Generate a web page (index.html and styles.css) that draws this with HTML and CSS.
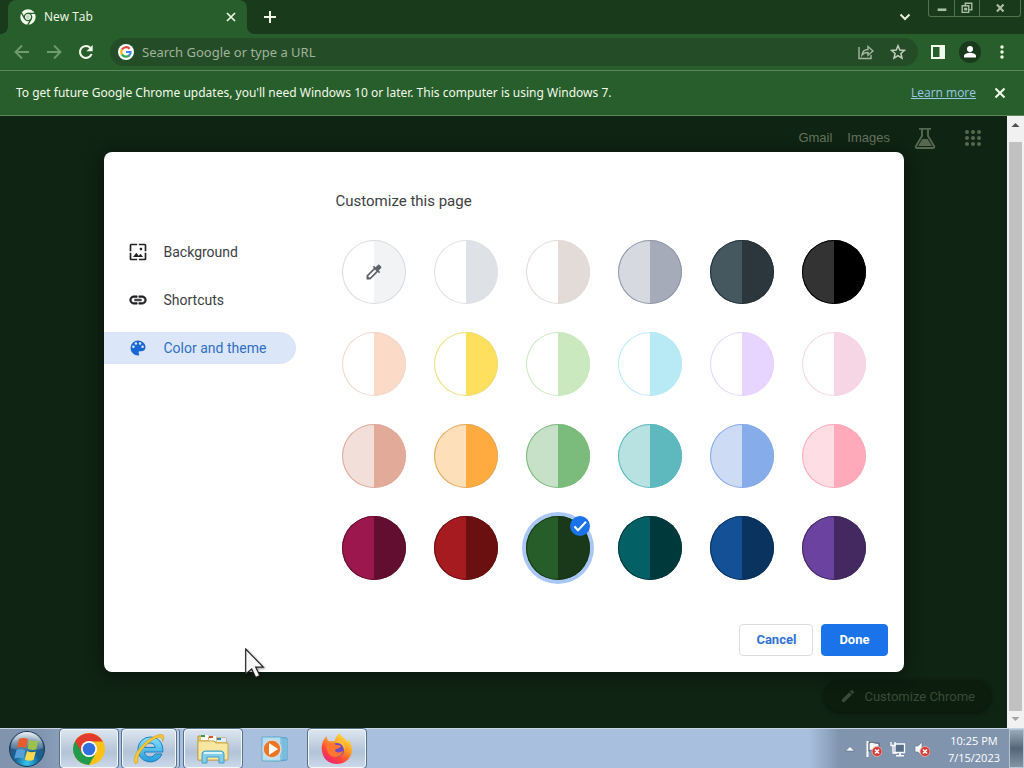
FILE: index.html
```html
<!DOCTYPE html>
<html lang="en">
<head>
<meta charset="utf-8">
<title>New Tab</title>
<link rel="stylesheet" href="styles.css">
</head>
<body>
<header class="browser">
  <div class="tab-strip">
    <div class="tab">
      <svg class="tab-icon" viewBox="0 0 24 24"><circle cx="12" cy="12" r="11.5" fill="#f1fbea"/><g fill="none" stroke="#285e2b" stroke-width="2"><circle cx="12" cy="12" r="5.5"/><path d="M12 6.5h11M7.2 14.7 2 5.5M16.8 14.7 11.500 24"/></g><circle cx="12" cy="12" r="3" fill="#c5d4c0"/></svg>
      <span class="tab-title">New Tab</span>
      <button class="icon-button tab-close" aria-label="Close tab"><svg viewBox="0 0 16 16"><path d="M4 4l8 8M12 4l-8 8" stroke="#eef8e6" stroke-width="1.700"/></svg></button>
    </div>
    <button class="icon-button new-tab" aria-label="New tab"><svg viewBox="0 0 16 16"><path d="M8 2v12M2 8h12" stroke="#eef8e6" stroke-width="2"/></svg></button>
    <button class="icon-button tab-search" aria-label="Search tabs"><svg viewBox="0 0 16 16"><path d="M3.500 5.500 8 10l4.500-4.500" fill="none" stroke="#e4f0dc" stroke-width="2"/></svg></button>
    <div class="window-controls">
      <button aria-label="Minimize"><svg viewBox="0 0 16 16"><path d="M3 8.500h10v3H3z" fill="#a8bfa4"/></svg></button>
      <button aria-label="Restore"><svg viewBox="0 0 16 16"><path d="M6 5V2.500h7.500V10H11M2.500 5.500h7.500V13H2.500zM5.500 8.500h2V10h-2z" fill="none" stroke="#a8bfa4" stroke-width="1.600"/></svg></button>
      <button class="window-close" aria-label="Close"><svg viewBox="0 0 16 16"><path d="m4.500 4 7.500 8M12 4l-7.500 8" stroke="#a8bfa4" stroke-width="2.400"/></svg></button>
    </div>
  </div>
  <div class="toolbar">
    <button class="icon-button" aria-label="Back"><svg viewBox="0 0 16 16"><path d="M15 8H2M8 1.500 1.500 8 8 14.500" fill="none" stroke="#729a70" stroke-width="1.800"/></svg></button>
    <button class="icon-button" aria-label="Forward"><svg viewBox="0 0 16 16"><path d="M1 8h13M8 1.500 14.500 8 8 14.500" fill="none" stroke="#729a70" stroke-width="1.800"/></svg></button>
    <button class="icon-button" aria-label="Reload"><svg viewBox="0 0 16 16"><path d="M13.600 10A6 6 0 1 1 12.500 4" fill="none" stroke="#f1fbea" stroke-width="2.100"/><path d="M14.700 1v6.300H8.400z" fill="#f1fbea"/></svg></button>
    <div class="omnibox">
      <span class="cell"><svg viewBox="0 0 16 16"><circle cx="8" cy="8" r="8" fill="#fff"/><g fill="none" stroke-width="2.200"><path d="M11.600 4.800A4.700 4.700 0 0 0 4 5.600" stroke="#e84436"/><path d="M4 5.500a4.800 4.800 0 0 0 0 5" stroke="#f9bb10"/><path d="M4 10.400a4.700 4.700 0 0 0 7.300 1" stroke="#34a853"/><path d="M11.100 11.600A4.500 4.500 0 0 0 12.600 8H8" stroke="#4285f4"/></g></svg></span>
      <input class="omnibox-input" type="text" aria-label="Address and search bar" placeholder="Search Google or type a URL">
      <button class="icon-button" aria-label="Share"><svg viewBox="0 0 16 16"><g fill="none" stroke="#a5b7a0" stroke-width="1.400"><path d="M1 3v11.500h12V11"/><path d="M4 11c.5-4 3-5.500 6-5.500V2.500L15 7l-5 4.300V8.500C7 8.500 5.500 9 4 11z"/></g></svg></button>
      <button class="icon-button" aria-label="Bookmark this tab"><svg viewBox="0 0 16 16"><path d="m8 1.700 1.800 4.300 4.700.4-3.600 3.100 1.100 4.600L8 11.600l-4 2.500 1.100-4.600L1.500 6.400 6.200 6z" fill="none" stroke="#c2cfbd" stroke-width="1.500"/></svg></button>
    </div>
    <button class="icon-button" aria-label="Side panel"><svg viewBox="0 0 16 16"><path d="M2 2h12v12H2z" fill="none" stroke="#f1fbea" stroke-width="2"/><path d="M9.500 2H14v12H9.500z" fill="#f1fbea"/></svg></button>
    <button class="icon-button profile" aria-label="Profile"><svg viewBox="0 0 22 22"><circle cx="11" cy="11" r="11" fill="#193a1b"/><circle cx="11" cy="8" r="3" fill="#fff"/><path d="M5 16.500v-1.700c0-2 4-3 6-3s6 1 6 3v1.700z" fill="#fff"/></svg></button>
    <button class="icon-button" aria-label="Menu"><svg viewBox="0 0 16 16"><g fill="#f1fbea"><circle cx="8" cy="3" r="1.700"/><circle cx="8" cy="8" r="1.700"/><circle cx="8" cy="13" r="1.700"/></g></svg></button>
  </div>
  <div class="infobar">
    <p class="infobar-text">To get future Google Chrome updates, you'll need Windows 10 or later. This computer is using Windows 7.</p>
    <a class="infobar-link" href="#">Learn more</a>
    <button class="icon-button infobar-close" aria-label="Dismiss"><svg viewBox="0 0 16 16"><path d="m3.500 3.500 9 9M12.500 3.500l-9 9" stroke="#f1fbea" stroke-width="2"/></svg></button>
  </div>
</header>

<main class="viewport">
  <div class="page">
    <nav class="page-nav">
      <a href="#">Gmail</a>
      <a href="#">Images</a>
      <button class="icon-button labs" aria-label="Search Labs"><svg viewBox="0 0 24 24"><path d="M6 2h12v1.700H6z" fill="#56684f"/><path d="M9 3v7L3 20c-.8 1.300 0 2 1 2h16c1 0 1.800-.7 1-2l-6-10V3" fill="none" stroke="#56684f" stroke-width="1.900"/><path d="M9.500 13h5l4.500 7H5z" fill="#56684f"/></svg></button>
      <button class="icon-button apps" aria-label="Google apps"><svg viewBox="0 0 24 24"><path d="M6 6h.01M12 6h.01M18 6h.01M6 12h.01M12 12h.01M18 12h.01M6 18h.01M12 18h.01M18 18h.01" stroke="#56684f" stroke-width="4" stroke-linecap="round"/></svg></button>
    </nav>
    <button class="customize"><svg viewBox="0 0 24 24"><path d="M3 17.250V21h3.750L17.810 9.940l-3.750-3.750zM20.710 7.040a1 1 0 0 0 0-1.410l-2.340-2.340a1 1 0 0 0-1.410 0l-1.830 1.830 3.750 3.750z" fill="#3a4b37"/></svg>Customize Chrome</button>

    <section class="dialog" role="dialog" aria-labelledby="dialog-title">
      <nav class="menu">
        <button class="menu-item"><svg viewBox="0 0 24 24"><path d="M4 4h7V2H4c-1.100 0-2 .9-2 2v7h2zm6 9-4 5h12l-3-4-2.030 2.710zm7-4.500c0-.83-.67-1.500-1.500-1.500S14 7.670 14 8.500s.67 1.500 1.500 1.500S17 9.330 17 8.500zM20 2h-7v2h7v7h2V4c0-1.100-.9-2-2-2zm0 18h-7v2h7c1.100 0 2-.9 2-2v-7h-2zM4 13H2v7c0 1.100.9 2 2 2h7v-2H4z" fill="#202124"/></svg>Background</button>
        <button class="menu-item"><svg viewBox="0 0 24 24"><path d="M3.900 12c0-1.710 1.390-3.100 3.100-3.100h4V7H7c-2.760 0-5 2.240-5 5s2.240 5 5 5h4v-1.900H7c-1.710 0-3.100-1.390-3.100-3.100zM8 13h8v-2H8zm9-6h-4v1.900h4c1.710 0 3.100 1.390 3.100 3.100s-1.390 3.100-3.100 3.100h-4V17h4c2.760 0 5-2.240 5-5s-2.240-5-5-5z" fill="#202124" stroke="#202124" stroke-width=".7"/></svg>Shortcuts</button>
        <button class="menu-item selected" aria-current="page"><svg viewBox="0 0 24 24"><path d="M12 3a9 9 0 0 0 0 18c.83 0 1.500-.67 1.500-1.500 0-.39-.15-.74-.39-1.010-.23-.26-.38-.61-.38-.99 0-.83.67-1.500 1.500-1.500H16c2.760 0 5-2.240 5-5 0-4.420-4.030-8-9-8zm-5.500 9c-.83 0-1.500-.67-1.500-1.500S5.670 9 6.500 9 8 9.670 8 10.500 7.330 12 6.500 12zm3-4C8.670 8 8 7.330 8 6.500S8.670 5 9.500 5s1.500.67 1.500 1.500S10.330 8 9.500 8zm5 0c-.83 0-1.500-.67-1.500-1.500S13.670 5 14.500 5s1.500.67 1.500 1.500S15.330 8 14.500 8zm3 4c-.83 0-1.500-.67-1.500-1.500S16.670 9 17.500 9s1.500.67 1.500 1.500-.67 1.500-1.500 1.500z" fill="#1967d2"/></svg>Color and theme</button>
      </nav>
      <div class="content">
        <h1 class="dialog-title" id="dialog-title">Customize this page</h1>
        <div class="swatches" role="radiogroup" aria-label="Color and theme">
          <label class="swatch"><input class="custom" type="radio" name="theme" aria-label="Custom color"><svg class="picker" viewBox="0 0 24 24"><path d="m20.710 5.630-2.340-2.340a1 1 0 0 0-1.410 0l-3.120 3.120-1.930-1.910-1.410 1.410 1.420 1.420L3 16.250V21h4.750l8.920-8.920 1.420 1.420 1.410-1.410-1.920-1.920 3.120-3.120c.4-.4.4-1.030.01-1.420zM6.920 19 5 17.080l8.060-8.060 1.920 1.920z" fill="#5f6368"/></svg></label>
          <label class="swatch"><input class="default" type="radio" name="theme" aria-label="Default color"></label>
          <label class="swatch"><input class="warm-grey" type="radio" name="theme" aria-label="Warm grey"></label>
          <label class="swatch"><input class="cool-grey" type="radio" name="theme" aria-label="Cool grey"></label>
          <label class="swatch"><input class="midnight" type="radio" name="theme" aria-label="Midnight blue"></label>
          <label class="swatch"><input class="black" type="radio" name="theme" aria-label="Black"></label>
          <label class="swatch"><input class="beige" type="radio" name="theme" aria-label="Beige and white"></label>
          <label class="swatch"><input class="yellow" type="radio" name="theme" aria-label="Yellow and white"></label>
          <label class="swatch"><input class="light-green" type="radio" name="theme" aria-label="Green and white"></label>
          <label class="swatch"><input class="light-teal" type="radio" name="theme" aria-label="Light teal and white"></label>
          <label class="swatch"><input class="light-purple" type="radio" name="theme" aria-label="Light purple and white"></label>
          <label class="swatch"><input class="light-pink" type="radio" name="theme" aria-label="Pink and white"></label>
          <label class="swatch"><input class="tan" type="radio" name="theme" aria-label="Beige"></label>
          <label class="swatch"><input class="orange" type="radio" name="theme" aria-label="Orange"></label>
          <label class="swatch"><input class="green" type="radio" name="theme" aria-label="Light green"></label>
          <label class="swatch"><input class="teal" type="radio" name="theme" aria-label="Light teal"></label>
          <label class="swatch"><input class="blue" type="radio" name="theme" aria-label="Light blue"></label>
          <label class="swatch"><input class="pink" type="radio" name="theme" aria-label="Pink"></label>
          <label class="swatch"><input class="dark-pink" type="radio" name="theme" aria-label="Dark pink and red"></label>
          <label class="swatch"><input class="dark-red" type="radio" name="theme" aria-label="Dark red and orange"></label>
          <label class="swatch"><input class="dark-green" type="radio" name="theme" aria-label="Dark green" checked><svg class="check" viewBox="0 0 20 20"><circle cx="10" cy="10" r="10" fill="#1a73e8"/><path d="m4.500 10.500 3.500 3.700 8-8.500" fill="none" stroke="#fff" stroke-width="2"/></svg></label>
          <label class="swatch"><input class="dark-teal" type="radio" name="theme" aria-label="Dark teal"></label>
          <label class="swatch"><input class="dark-blue" type="radio" name="theme" aria-label="Dark blue"></label>
          <label class="swatch"><input class="dark-purple" type="radio" name="theme" aria-label="Dark purple"></label>
        </div>
      </div>
      <footer class="actions">
        <button class="action">Cancel</button>
        <button class="action primary">Done</button>
      </footer>
    </section>
  </div>
  <div class="scrollbar" aria-hidden="true">
    <svg class="scroll-arrow" viewBox="0 0 17 17"><path d="m4.500 11 4-4 4 4z" fill="#505050"/></svg>
    <div class="scroll-track"><div class="scroll-thumb"></div></div>
    <svg class="scroll-arrow" viewBox="0 0 17 17"><path d="m4.500 6 4 4 4-4z" fill="#a3a3a3"/></svg>
  </div>
</main>

<footer class="taskbar">
  <button class="start" aria-label="Start"><svg viewBox="0 0 38 38"><defs><radialGradient id="orb" cx=".5" cy=".9" r=".9"><stop offset="0" stop-color="#39c6ee"/><stop offset=".4" stop-color="#126398"/><stop offset=".75" stop-color="#31577d"/><stop offset="1" stop-color="#a3bfd2"/></radialGradient><linearGradient id="gloss" x2="0" y2="1"><stop offset="0" stop-color="#fff" stop-opacity=".75"/><stop offset="1" stop-color="#fff" stop-opacity=".12"/></linearGradient></defs><circle cx="19" cy="19" r="17.500" fill="url(#orb)" stroke="#1c3755"/><path d="M3 18a16 16 0 0 1 32 0c-8 4-24 4-32 0z" fill="url(#gloss)"/><path d="M11 9c3-1.500 6-1.500 9 .3l-2 9c-3-1.600-6-1.600-9-.3z" fill="#e65c2a"/><path d="M21.500 10c3 1.500 6 1.400 9 .2l-2.200 9c-3 1-6 1-8.700-.6z" fill="#9bc34b"/><path d="M8.500 20c3-1.500 6-1.300 9 .2l-2.200 8.600c-3-1.500-6-1.500-9-.2z" fill="#579fd9"/><path d="M19 21c3 1.500 6 1.600 8.800.4l-2.300 8.700c-3 1-6 1-8.700-.5z" fill="#fad84e"/></svg></button>
  <button class="task running" aria-label="Google Chrome"><svg viewBox="0 0 32 32"><circle cx="16" cy="16" r="16" fill="#fbc116"/><path d="M2.150 8A16 16 0 0 0 16 32l6.900-12L16 16z" fill="#229a4b"/><path d="M2.150 8 9 20l7-4V8.500h13.850A16 16 0 0 0 2.150 8z" fill="#e33b2e"/><circle cx="16" cy="16" r="8" fill="#fff"/><circle cx="16" cy="16" r="6.300" fill="#326fdf"/></svg></button>
  <button class="task running stacked" aria-label="Internet Explorer"><svg viewBox="0 0 32 32"><defs><linearGradient id="ie" x2="0" y2="1"><stop offset="0" stop-color="#8ae0fa"/><stop offset="1" stop-color="#259bda"/></linearGradient></defs><path d="M17 4a12.500 12.500 0 1 0 12 17h-7c-1 2-2.800 3-5 3-3.300 0-5.300-2-5.500-5h18.300C30.500 10 25.500 4 17 4zm-5.300 10.500c.5-3 2.500-4.500 5.300-4.500s4.800 1.500 5.200 4.500z" fill="url(#ie)" stroke="#1d7fc2"/><path d="M2.500 31C-4 23 16 2 28 1.500c4-.2 3 4.500 1.500 7C30 4.500 28 3.500 24 5 15 8 2 22 5 29z" fill="#f7c935" stroke="#d19a16" stroke-width=".6"/></svg></button>
  <button class="task running" aria-label="Windows Explorer"><svg viewBox="0 0 32 32"><path d="M1 5V3h8l2 2h18v22H1z" fill="#e9c85d" stroke="#bd9740"/><path d="M4 2h7v5H4zm8 1h7v5h-7z" fill="#fff"/><path d="M4 2h4v2H4z" fill="#349c55"/><path d="M12 3h4v2h-4z" fill="#d25c25"/><path d="M20 5h9v4h-9z" fill="#dceeff"/><path d="M20 5h4v2h-4z" fill="#3781c4"/><path d="M1 8h16l2 2h12v17H1z" fill="#f8e7a0" stroke="#c6a552"/><path d="M5 30v-8c0-3 1-4 4-4h14c3 0 4 1 4 4v8h-5v-6H10v6z" fill="#83cdeb" stroke="#3f9fc9"/><path d="M7 20h18" stroke="#d8f4ff" stroke-width="2"/></svg></button>
  <button class="task" aria-label="Windows Media Player"><svg viewBox="0 0 32 32"><path d="m14 4 14 1v22l-14 1z" fill="#a9daf0" stroke="#4b9fca"/><path d="M24 5v23M26 5v22" stroke="#4b9fca"/><path d="M3 4h19v24H3z" fill="#b5def1" stroke="#68aacb"/><circle cx="13" cy="16" r="9" fill="#ed7625" stroke="#d5dce1" stroke-width="1.500"/><path d="m10 10 9 6-9 6z" fill="#fff"/></svg></button>
  <button class="task running" aria-label="Firefox"><svg viewBox="0 0 32 32"><defs><linearGradient id="fx" x1=".85" y1="0" x2=".2" y2="1"><stop offset="0" stop-color="#fff14a"/><stop offset=".4" stop-color="#ff9a26"/><stop offset=".7" stop-color="#ff453d"/><stop offset="1" stop-color="#e81f76"/></linearGradient></defs><path d="M19 0c-4 3-5 6-5 8-3 0-5 1-7-.5C6 6 5.500 4.500 6 3 2 6 0 12 1 18c1 8 7 13 15 13s15-6 15-14c0-5-2-9-4-11l.5 4C24 4 19 4 19 0z" fill="url(#fx)"/><circle cx="16" cy="17" r="7" fill="#7548c4"/><path d="M5 11c4-2 8-1 10 1 2 0 4 0 5 1-1 3-5 2-6 4 0 3 5 3 8 1-1 8-14 8-16-1z" fill="#ff7630"/><path d="M14 9c5 0 9 3 9 8 2-4 0-9-4-11z" fill="#ffbd35"/></svg></button>
  <div class="tray">
    <button class="tray-icon" aria-label="Show hidden icons"><svg viewBox="0 0 16 16"><path d="m3.500 10 4.500-4.500 4.500 4.500z" fill="#f5faff" stroke="#46586d" stroke-width=".5"/></svg></button>
    <button class="tray-icon" aria-label="Action Center"><svg viewBox="0 0 16 16"><path d="M1.500 0v16" stroke="#fff" stroke-width="2"/><path d="M3 2c4-2 5 1 10 0v8c-5 1-6-2-10 0z" fill="#f5f6f8" stroke="#465468"/><circle cx="11" cy="10.500" r="5" fill="#d53d35" stroke="#f8c2bd" stroke-width=".7"/><path d="m9 8.500 4 4m0-4-4 4" stroke="#fff" stroke-width="1.600"/></svg></button>
    <button class="tray-icon" aria-label="Network"><svg viewBox="0 0 16 16"><path d="M5 3h9.500v8.500H5z" fill="#566e87" stroke="#f4faff" stroke-width="1.300"/><path d="M10 11.500V14M6 14.800h8" stroke="#fff" stroke-width="1.600"/><path d="M1 1v3.500h4V1M3 4.500V12h4" fill="none" stroke="#fff" stroke-width="1.300"/></svg></button>
    <button class="tray-icon" aria-label="Volume muted"><svg viewBox="0 0 16 16"><path d="M1 5h3l4-4v14l-4-4H1z" fill="#f4f8fb" stroke="#617084" stroke-width=".6"/><circle cx="11" cy="10.500" r="5" fill="#d53d35" stroke="#f8c2bd" stroke-width=".7"/><path d="m9 8.500 4 4m0-4-4 4" stroke="#fff" stroke-width="1.600"/></svg></button>
    <time class="clock" datetime="2023-07-15T22:25">10:25 PM<br>7/15/2023</time>
    <button class="show-desktop" aria-label="Show desktop"></button>
  </div>
</footer>

<svg class="cursor" viewBox="0 0 20 30" aria-hidden="true"><path d="M.7 1v25l6-5 4 8.500 4-2-4-8.300h7.600z" fill="#f8f8f8" stroke="#222" stroke-width="1.200"/></svg>
</body>
</html>
```

FILE: styles.css
```css
* {
  box-sizing: border-box;
}

body {
  margin: 0;
  min-height: 100vh;
  display: flex;
  flex-direction: column;
  font-family: Roboto, sans-serif;
  background: #102413;
}

button {
  border: 0;
  padding: 0;
  margin: 0;
  background: none;
  font: inherit;
  color: inherit;
}

svg {
  display: block;
  flex: none;
}

.browser {
  font-family: "Open Sans", "Noto Sans", sans-serif;
  color: #f1fbea;
  background: #285e2b;
}

.icon-button,
.cell {
  width: 32px;
  height: 32px;
  flex: none;
  display: grid;
  place-items: center;
}

.icon-button svg,
.cell svg {
  width: 16px;
  height: 16px;
}

/* Tab strip */
.tab-strip {
  height: 34px;
  display: flex;
  align-items: center;
  padding: 0 3px 0 8px;
  background: #193a1b;
}

.tab {
  position: relative;
  width: 239px;
  height: 34px;
  display: flex;
  align-items: center;
  padding-left: 12px;
  border-radius: 8px 8px 0 0;
  background: #285e2b;
}

.tab::before,
.tab::after {
  content: "";
  position: absolute;
  bottom: 0;
  width: 8px;
  height: 8px;
}

.tab::before {
  right: 100%;
  background: radial-gradient(circle at 0 0, #193a1b 8px, #285e2b 8px);
}

.tab::after {
  left: 100%;
  background: radial-gradient(circle at 100% 0, #193a1b 8px, #285e2b 8px);
}

.tab-icon {
  width: 16px;
  height: 16px;
}

.tab-title {
  flex: 1;
  margin-left: 8px;
  font-size: 12px;
  line-height: 16px;
}

.new-tab {
  margin-left: 7px;
}

.tab-search {
  margin-left: auto;
}

.window-controls {
  align-self: flex-start;
  display: flex;
  margin-left: 7px;
  border: 1px solid #52754f;
  border-top: 0;
  border-radius: 0 0 3px 3px;
}

.window-controls button {
  width: 25px;
  height: 16px;
  display: grid;
  place-items: center;
}

.window-controls button + button {
  border-left: 1px solid #52754f;
}

.window-controls .window-close {
  width: 41px;
}

.window-controls svg {
  width: 14px;
  height: 14px;
}

/* Toolbar */
.toolbar {
  height: 36px;
  display: flex;
  align-items: center;
  padding: 0 6px;
}

.omnibox {
  flex: 1;
  height: 28px;
  display: flex;
  align-items: center;
  margin: 0 4px 0 8px;
  padding-right: 4px;
  border-radius: 14px;
  background: #244c27;
}

.omnibox-input {
  flex: 1;
  min-width: 0;
  padding: 0;
  border: 0;
  outline: 0;
  background: none;
  color: #f1fbea;
  font: 13px/20px "Noto Sans", "Open Sans", sans-serif;
}

.omnibox-input::placeholder {
  color: #a0b39c;
  opacity: 1;
}

.toolbar .profile svg {
  width: 22px;
  height: 22px;
}

/* Infobar */
.infobar {
  height: 46px;
  display: flex;
  align-items: center;
  padding: 0 8px 0 16px;
  border-top: 1px solid #5a865a;
  border-bottom: 1px solid #5a865a;
  font-size: 12px;
  line-height: 16px;
}

.infobar-text {
  flex: 1;
  margin: 0;
  font-family: "Noto Sans", "Open Sans", sans-serif;
}

.infobar-link {
  color: #9bc8e8;
}

.infobar-close {
  margin-left: 8px;
}

/* Page */
.viewport {
  flex: 1;
  display: flex;
}

.page {
  position: relative;
  flex: 1;
  display: flex;
  flex-direction: column;
  justify-content: space-between;
  align-items: flex-end;
  background: #102413;
}

.page-nav {
  display: flex;
  align-items: center;
  height: 43px;
  padding-right: 18px;
  font-family: "Liberation Sans", Arial, sans-serif;
  font-size: 13px;
}

.page-nav a {
  margin-right: 15px;
  color: #66735f;
  text-decoration: none;
}

.page-nav svg {
  width: 24px;
  height: 24px;
}

.labs {
  margin: 0 16px 0 4px;
}

.customize {
  height: 32px;
  display: flex;
  align-items: center;
  gap: 8px;
  margin: 0 16px 16px 0;
  padding: 0 16px;
  border-radius: 16px;
  background: #0c1d0e;
  color: #3a4b37;
  font-size: 13px;
  box-shadow: 0 1px 4px #08130a;
}

.customize svg {
  width: 16px;
  height: 16px;
}

/* Dialog sits above the dimmed page */
.dialog {
  position: absolute;
  top: 36px;
  left: 0;
  right: 0;
  margin: 0 auto;
  width: 800px;
  max-width: calc(100% - 32px);
  min-height: 520px;
  display: grid;
  grid-template-columns: 192px 1fr;
  grid-template-rows: 1fr auto;
  border-radius: 8px;
  background: #fff;
  color: #3c4043;
  box-shadow: 0 2px 16px #07100a;
}

.menu {
  display: flex;
  flex-direction: column;
  gap: 16px;
  padding-top: 84px;
}

.menu-item {
  height: 32px;
  display: flex;
  align-items: center;
  gap: 16px;
  padding-left: 24px;
  border-radius: 0 16px 16px 0;
  font-size: 14px;
  text-align: left;
}

.menu-item svg {
  width: 20px;
  height: 20px;
}

.menu-item.selected {
  background: #dce6f9;
  color: #2f6fc4;
}

.content {
  padding: 39px 37px 0 40px;
}

.dialog-title {
  margin: 0;
  font-size: 15px;
  line-height: 20px;
  font-weight: 400;
  color: #3c4043;
}

.swatches {
  display: grid;
  grid-template-columns: repeat(6, 64px);
  justify-content: space-between;
  row-gap: 28px;
  margin-top: 29px;
  padding-left: 6px;
}

.swatch {
  position: relative;
  height: 64px;
}

.swatch input {
  appearance: none;
  display: block;
  width: 64px;
  height: 64px;
  margin: 0;
  border-radius: 50%;
  background: linear-gradient(90deg, var(--left) 50%, var(--right) 50%);
  box-shadow: inset 0 0 0 1px var(--edge, var(--right));
}

.swatch input:checked {
  box-shadow: inset 0 0 0 1px #163719, 0 0 0 4px #a9c7f4;
}

.picker {
  position: absolute;
  inset: 22px;
  width: 20px;
  height: 20px;
}

.check {
  position: absolute;
  top: 0;
  right: 0;
  width: 20px;
  height: 20px;
}

.custom { --left: #fff; --right: #f1f3f4; --edge: #dadce0; }
.default { --left: #fff; --right: #dee1e6; }
.warm-grey { --left: #fff; --right: #e2dbd8; }
.cool-grey { --left: #d7d9e1; --right: #a5abb8; --edge: #8f97a8; }
.midnight { --left: #455860; --right: #2b373d; --edge: #263238; }
.black { --left: #333; --right: #000; }
.beige { --left: #fff; --right: #fbdac8; --edge: #eed9cc; }
.yellow { --left: #fff; --right: #ffdf5e; --edge: #eadf7a; }
.light-green { --left: #fff; --right: #cbe9be; }
.light-teal { --left: #fff; --right: #b7eaf5; }
.light-purple { --left: #fff; --right: #e7d4ff; }
.light-pink { --left: #fff; --right: #f6d5e4; }
.tan { --left: #f2dfda; --right: #e1aa99; }
.orange { --left: #fddfb9; --right: #ffab40; --edge: #e5a95f; }
.green { --left: #c6e1c7; --right: #7bbb7c; }
.teal { --left: #b8e1e1; --right: #5db9be; }
.blue { --left: #cddbf5; --right: #86ade9; }
.pink { --left: #ffdde5; --right: #ffaabb; }
.dark-pink { --left: #9d174f; --right: #620e30; }
.dark-red { --left: #a61b20; --right: #6a1011; }
.dark-green { --left: #275d28; --right: #19391a; }
.dark-teal { --left: #036064; --right: #00393b; }
.dark-blue { --left: #145096; --right: #0a335f; }
.dark-purple { --left: #6b429f; --right: #442961; }

.actions {
  grid-column: 1 / -1;
  display: flex;
  justify-content: flex-end;
  gap: 8px;
  padding: 16px;
}

.action {
  height: 32px;
  padding: 0 16px;
  border: 1px solid #dadce0;
  border-radius: 4px;
  color: #2f72d0;
  font-size: 13px;
  line-height: 28px;
  font-weight: 700;
}

.action.primary {
  padding: 0 17px;
  border-color: #1a73e8;
  background: #1a73e8;
  color: #fff;
}

/* Scrollbar */
.scrollbar {
  width: 17px;
  flex: none;
  display: flex;
  flex-direction: column;
  background: #f1f1f1;
}

.scroll-arrow {
  width: 17px;
  height: 17px;
}

.scroll-track {
  flex: 1;
  display: flex;
  padding: 9px 2px 0;
}

.scroll-thumb {
  flex: 1;
  background: #c1c1c1;
}

/* Taskbar */
.taskbar {
  height: 40px;
  display: flex;
  align-items: stretch;
  border-top: 1px solid #c5d3e2;
  background: linear-gradient(90deg, #8094ae 0, #8094ae 40px, #a8c0de 120px, #a8c0de 79%, #8094ae 82%);
}

.start {
  width: 60px;
  padding-left: 8px;
}

.start svg {
  width: 38px;
  height: 38px;
}

.task {
  width: 58px;
  display: grid;
  place-items: center;
  margin-right: 4px;
}

.task svg {
  width: 32px;
  height: 32px;
}

.task.running {
  border: 1px solid #f3f8fd;
  border-radius: 3px;
  outline: 1px solid #566f8d;
  outline-offset: 0;
  background: linear-gradient(#dce5ef, #b3c3d8 60%, #cad8e8);
}

.task.stacked {
  width: 54px;
  margin-right: 8px;
  box-shadow: 3px 0 0 #bfd0e4, 4px 0 0 #566f8d;
}

.tray {
  margin-left: auto;
  display: flex;
  align-items: center;
  gap: 8px;
  color: #fff;
}

.tray-icon svg {
  width: 16px;
  height: 16px;
}

.clock {
  margin: 0 1px 0 10px;
  font: 11px/17px "Open Sans", "Noto Sans", sans-serif;
  text-align: center;
}

.show-desktop {
  width: 15px;
  align-self: stretch;
  border: 1px solid #b5c5d4;
  background: linear-gradient(#9aabba, #536679 50%, #8295a7);
}

/* Mouse pointer floats above the page */
.cursor {
  position: absolute;
  left: 245px;
  top: 648px;
  width: 20px;
  height: 30px;
  filter: drop-shadow(1px 1px 1px #0006);
}
```
